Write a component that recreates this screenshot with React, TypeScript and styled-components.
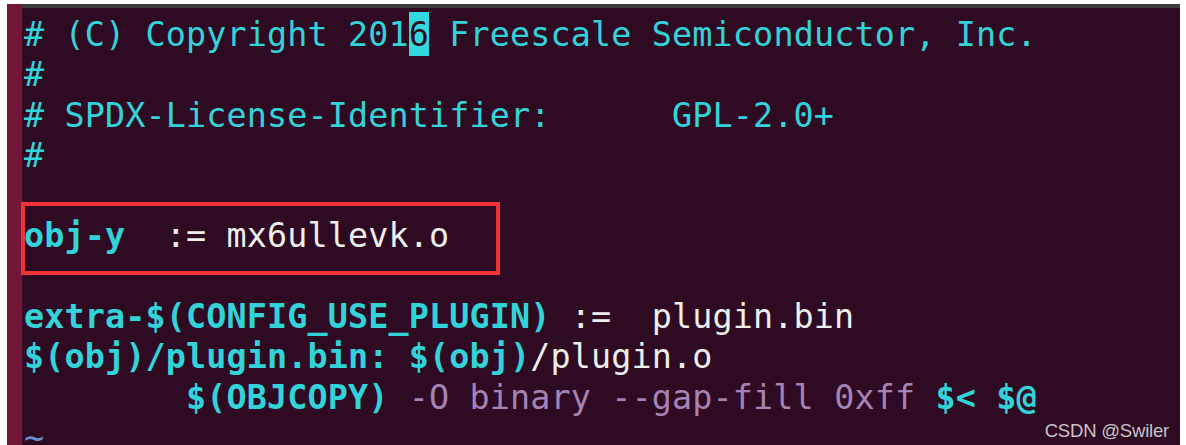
import React from "react";
import styled, { createGlobalStyle } from "styled-components";

const Global = createGlobalStyle`
  html, body { margin: 0; padding: 0; background: #ffffff; overflow: hidden; }
  body { width: 1186px; height: 445px; }
`;

const Frame = styled.div`
  margin: 4px 0 0 7px;
  width: 1173px;
  height: 460px;
  display: flex;
`;

const Gutter = styled.div`
  width: 15px;
  flex: none;
  background: #76153a;
`;

const Main = styled.div`
  flex: 1;
  display: flex;
  flex-direction: column;
`;

const TopBar = styled.div`
  height: 4px;
  background: #3e3b3a;
`;

const Editor = styled.div`
  position: relative;
  flex: 1;
  background: #2e0b23;
  padding: 7px 0 0 2px;
  font-family: "DejaVu Sans Mono", "Liberation Mono", monospace;
  font-size: 33.4px;
  line-height: 40.3px;
  letter-spacing: 0.15px;
  color: #33d3da;
`;

const Line = styled.div`
  white-space: pre;
  height: 40.3px;
`;

const Txt = styled.span<{ $tone?: "white" | "dim" | "tilde" }>`
  color: ${(p) =>
    p.$tone === "white"
      ? "#eeeeec"
      : p.$tone === "dim"
      ? "#a583b4"
      : p.$tone === "tilde"
      ? "#6f8fd0"
      : "#33d3da"};
`;

const Bold = styled.span`
  font-weight: bold;
`;

const Cursor = styled.span`
  background: #33d8de;
  color: #2e0b23;
  padding: 3px 0 2px;
`;

const Highlight = styled.div`
  position: absolute;
  left: -1px;
  top: 194px;
  width: 471px;
  height: 65px;
  border: 4px solid #ef3437;
  pointer-events: none;
`;

const Watermark = styled.div`
  position: absolute;
  right: 11px;
  top: 412px;
  font-family: "Liberation Sans", Arial, sans-serif;
  font-size: 18.5px;
  letter-spacing: -0.2px;
  color: #c9c2c8;
  line-height: 22px;
`;

export default function App() {
  return (
    <>
      <Global />
      <Frame>
        <Gutter />
        <Main>
          <TopBar />
          <Editor>
            <Line>
              # (C) Copyright 201<Cursor>6</Cursor> Freescale Semiconductor, Inc.
            </Line>
            <Line>#</Line>
            <Line># SPDX-License-Identifier:      GPL-2.0+</Line>
            <Line>#</Line>
            <Line> </Line>
            <Line>
              <Bold>obj-y</Bold>  <Txt $tone="white">:= mx6ullevk.o</Txt>
            </Line>
            <Line> </Line>
            <Line>
              <Bold>extra-$(CONFIG_USE_PLUGIN)</Bold>
              <Txt $tone="white"> :=  plugin.bin</Txt>
            </Line>
            <Line>
              <Bold>$(obj)/plugin.bin: $(obj)</Bold>
              <Txt $tone="white">/plugin.o</Txt>
            </Line>
            <Line>
              {"        "}
              <Bold>$(OBJCOPY)</Bold>
              <Txt $tone="dim"> -O binary --gap-fill 0xff </Txt>
              <Bold>$&lt; $@</Bold>
            </Line>
            <Line>
              <Txt $tone="tilde">~</Txt>
            </Line>
            <Highlight />
            <Watermark>CSDN @Swiler</Watermark>
          </Editor>
        </Main>
      </Frame>
    </>
  );
}
